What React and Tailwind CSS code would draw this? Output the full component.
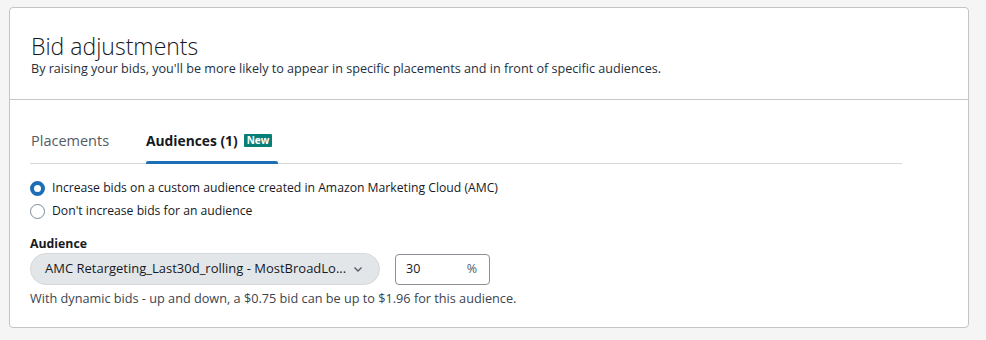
import React from "react";

export default function App() {
  return (
    <div className="w-[986px] h-[340px] bg-[#f5f5f5] pt-[7px] pl-[9px] font-['Open_Sans',sans-serif] text-[#16191f]">
      <div className="w-[960px] h-[321px] bg-white border border-[#c4c4c4] rounded-[4px]">
        <div className="h-[92px] border-b border-[#c6c6c6] pl-[21px] pt-[24px]">
          <h2 className="text-[23px] font-light leading-[28px] text-[#16191f]">Bid adjustments</h2>
          <p className="text-[12.6px] leading-[16px] text-[#232f3e] mt-[1px]">
            By raising your bids, you'll be more likely to appear in specific placements and in front of specific audiences.
          </p>
        </div>
        <div className="pl-[20px] pt-[30px]">
          <div className="w-[872px] border-b border-[#d5d9d9] flex items-end h-[34px]">
            <div className="w-[116px] h-full pl-[1px] text-[14.5px] text-[#545b64] leading-[20px] pt-[1px]">Placements</div>
            <div className="h-full relative flex items-start pt-[1px] pr-[6px]">
              <span className="text-[13.8px] font-bold text-[#16191f] leading-[20px]">Audiences (1)</span>
              <span className="ml-[6px] mt-[3px] bg-[#067f79] text-white text-[10px] font-bold leading-[13px] px-[3px] rounded-[1px]">New</span>
              <div className="absolute left-0 right-0 bottom-[-1px] h-[3px] bg-[#1d6fb5] rounded-t-[2px]"></div>
            </div>
          </div>
          <div className="mt-[15px] flex flex-col gap-[5px]">
            <label className="flex items-center gap-[7px] text-[12.2px] text-[#16191f] leading-[18px]">
              <span className="w-[15px] h-[15px] rounded-full border-[4.5px] border-[#1d6fb5] bg-white shrink-0"></span>
              Increase bids on a custom audience created in Amazon Marketing Cloud (AMC)
            </label>
            <label className="flex items-center gap-[7px] text-[12.2px] text-[#16191f] leading-[18px]">
              <span className="w-[15px] h-[15px] rounded-full border border-[#7d8998] bg-white shrink-0"></span>
              Don't increase bids for an audience
            </label>
          </div>
          <div className="mt-[16px]">
            <div className="text-[12.3px] font-bold leading-[16px] text-[#16191f]">Audience</div>
            <div className="flex items-center mt-[1px] gap-[15px]">
              <div className="w-[350px] h-[32px] rounded-full bg-[#e3e6e8] border border-[#d5d9d9] flex items-center pl-[14px] pr-[16px] justify-between">
                <span className="text-[13px] text-[#16191f] whitespace-nowrap">AMC Retargeting_Last30d_rolling - MostBroadLo...</span>
                <svg width="10" height="10" viewBox="0 0 10 10" className="shrink-0 ml-[4px]">
                  <path d="M1.5 3.5 L5 7 L8.5 3.5" fill="none" stroke="#545b64" strokeWidth="1.4" />
                </svg>
              </div>
              <div className="w-[95px] h-[31px] rounded-[4px] border border-[#8d9096] flex items-center justify-between pl-[10px] pr-[12px]">
                <span className="text-[12.5px] text-[#16191f]">30</span>
                <span className="text-[12.5px] text-[#545b64]">%</span>
              </div>
            </div>
            <div className="text-[12.7px] leading-[16px] text-[#3b4450] mt-[5px]">
              With dynamic bids - up and down, a $0.75 bid can be up to $1.96 for this audience.
            </div>
          </div>
        </div>
      </div>
    </div>
  );
}
